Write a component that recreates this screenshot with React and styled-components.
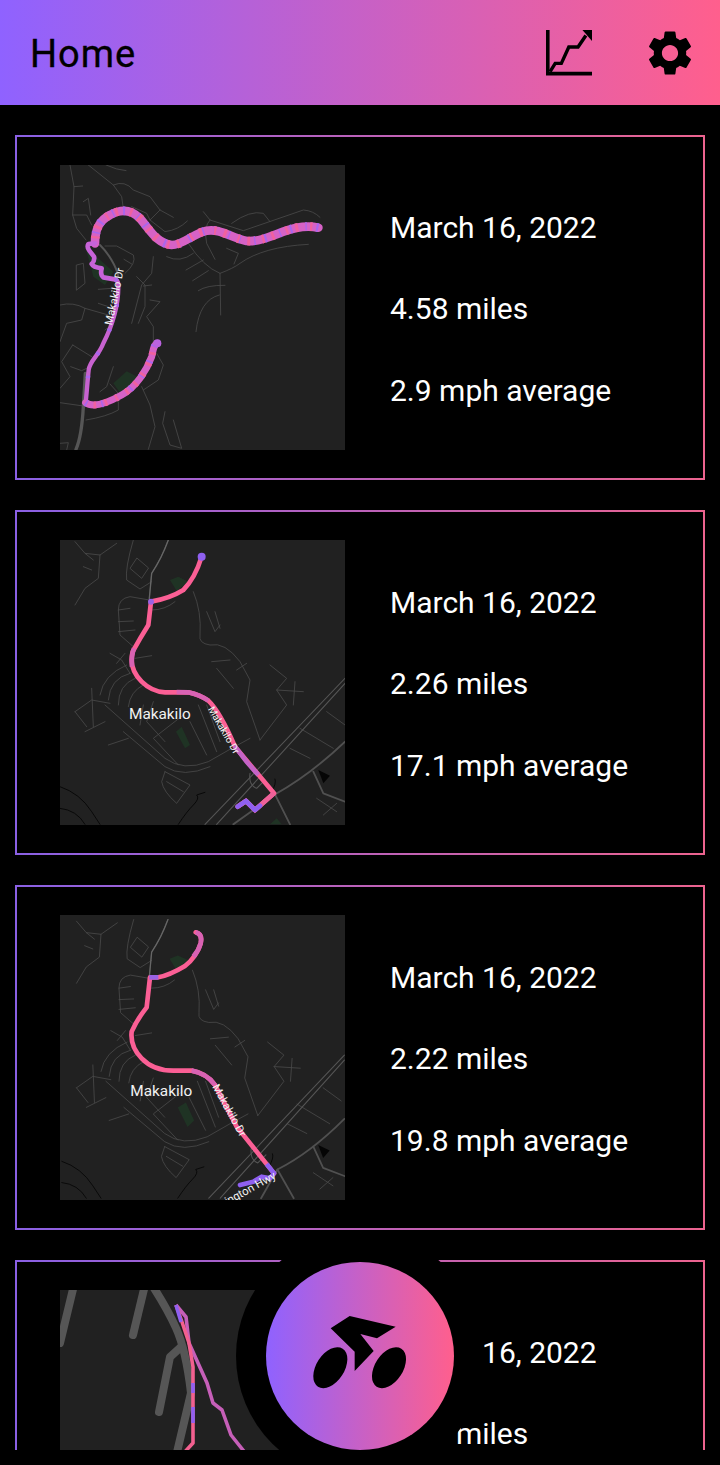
import React from 'react'
import styled, { createGlobalStyle } from 'styled-components'
import { MdSettings } from 'react-icons/md'

const brand = 'linear-gradient(90deg, #8f62ff 0%, #ff5f8d 100%)'

const GlobalStyle = createGlobalStyle`
  html, body {
    margin: 0;
    background: #000;
  }
  body {
    font-family: Roboto, "Noto Sans", sans-serif;
  }
`

const Screen = styled.div`
  position: relative;
  width: 720px;
  height: 1465px;
  overflow: hidden;
  background: #000;
`
const Header = styled.header`
  height: 105px;
  display: flex;
  align-items: center;
  justify-content: space-between;
  padding: 2px 23px 0 30px;
  box-sizing: border-box;
  background: ${brand};
`
const Title = styled.h1`
  margin: 0;
  font-size: 38px;
  line-height: 1;
  font-weight: 400;
  color: #000;
  letter-spacing: 1px;
  -webkit-text-stroke: 0.3px #000;
`
const HeaderActions = styled.div`
  display: flex;
  align-items: center;
  gap: 51px;
  margin-top: -2px;
  color: #000;
`
const ChartIcon = styled.svg`
  display: block;
  width: 46px;
  height: 46px;
`
const GearButton = styled.span`
  display: flex;
  width: 54px;
  height: 54px;
  align-items: center;
  justify-content: center;
  font-size: 54px;
`
const Feed = styled.main`
  height: 1345px;
  overflow: hidden;
  padding: 30px 15px 0;
  box-sizing: border-box;
  display: flex;
  flex-direction: column;
  gap: 30px;
`
const Card = styled.article`
  flex: none;
  height: 345px;
  box-sizing: border-box;
  display: flex;
  align-items: center;
  gap: 45px;
  padding: 0 0 0 43px;
  border: 2px solid;
  border-image: linear-gradient(90deg, #8a60e4, #ec638f) 1;
`
const MapFrame = styled.svg`
  flex: none;
  display: block;
  width: 285px;
  height: 285px;
  background: #212121;
`
const Stats = styled.div`
  display: flex;
  flex-direction: column;
  gap: 47px;
  margin-top: 4px;
`
const Stat = styled.div`
  font-size: 30px;
  line-height: 34.5px;
  color: #fff;
  white-space: nowrap;
`
const FabRing = styled.div`
  position: absolute;
  left: 236px;
  top: 1232px;
  width: 248px;
  height: 248px;
  border-radius: 50%;
  background: #000;
  display: flex;
  align-items: center;
  justify-content: center;
`
const Fab = styled.button`
  width: 188px;
  height: 188px;
  padding: 0;
  border: 0;
  border-radius: 50%;
  background: ${brand};
  display: flex;
  align-items: center;
  justify-content: center;
`
const BikeIcon = styled.svg`
  display: block;
  width: 94px;
  height: 75px;
  margin-bottom: 8px;
`

const Road = ({ d, w = 2.4, c = '#4b4b4b' }) => (
  <path d={d} fill="none" stroke={c} strokeWidth={w} strokeLinecap="round" strokeLinejoin="round" />
)

const Roads = ({ paths, w, c }) => paths.map((d, i) => <Road key={i} d={d} w={w} c={c} />)

// route drawn as a base colour with broken overlays, the map's speed colouring
const Route = ({ d, w, base, overlays = [] }) => (
  <g fill="none" strokeLinecap="round" strokeLinejoin="round" strokeWidth={w}>
    <path d={d} stroke={base} />
    {overlays.map((o, i) => (
      <path key={i} d={d} stroke={o.c} strokeDasharray={o.dash} strokeDashoffset={o.off || 0} strokeLinecap="butt" />
    ))}
  </g>
)

const MapLabel = ({ x, y, size = 46, rotate, children }) => (
  <text
    x={x}
    y={y}
    fill="#f2f2f2"
    fontFamily="Roboto, sans-serif"
    fontSize={size}
    transform={rotate ? `rotate(${rotate} ${x} ${y})` : undefined}
  >
    {children}
  </text>
)

const MapOne = () => (
  <MapFrame viewBox="30 15 855 855">
    <path d="M105 260 L190 335 L165 375 L130 350 L120 310 Z" fill="#1f3324" />
    <path d="M190 670 L230 634 L262 650 L268 672 L210 698 Z" fill="#1f3324" />
    <Roads
      paths={[
        'M60 15 L72 80 L68 165 L80 205 L108 240',
        'M115 15 L190 75 L215 110 L220 145',
        'M168 15 Q200 30 228 32',
        'M190 75 Q225 60 250 90 L300 110 L330 150 L370 172',
        'M68 165 L110 165 L125 195',
        'M72 80 L98 78',
        'M100 125 L115 115 L122 165',
        'M330 150 L300 180',
        'M245 140 L290 160 L300 180 L345 215 Q385 210 412 183',
        'M460 155 L480 180 L580 212 L760 150 Q790 152 810 172',
        'M545 190 Q600 150 640 160 L660 185',
        'M480 180 Q460 200 470 250 L495 298',
        'M415 250 Q460 320 510 340 Q550 325 570 310 Q640 260 775 253',
        'M350 290 Q390 310 430 280',
        'M408 330 L460 300',
        'M428 362 L475 332',
        'M530 265 L565 280 L552 312',
        'M445 392 Q470 375 525 376',
        'M510 340 L512 465',
        'M438 515 Q448 420 508 405',
        'M165 258 L200 258 L250 285 Q260 310 225 340',
        'M222 298 L245 312',
        'M310 290 L305 340 L275 375 L245 490',
        'M260 350 L285 375 L285 440 L265 490',
        'M305 375 L280 378 M300 420 L330 425 L290 470 L310 500 L310 550',
        'M30 435 Q70 425 105 445 L175 465',
        'M105 445 L95 480 L50 490 L30 545',
        'M145 430 L175 440 M165 510 L185 495 M145 388 L185 385',
        'M80 315 L100 310 L105 370 L80 390 Z',
        'M68 555 L35 605 L60 650 L30 685',
        'M68 555 L125 590 M62 620 L95 632 L110 625',
        'M30 728 L100 738 M108 780 Q170 770 205 750 L205 725',
        'M275 680 L300 735 L315 800 L295 868',
        'M345 755 L338 790 L360 855 L395 865 L370 780',
        'M30 850 L55 848 L50 870',
        'M190 620 L170 680 L150 695 M180 672 L205 700',
        'M320 580 L340 615 L325 660 L280 690'
      ]}
    />
    <Road d="M106 640 L100 740 Q95 830 78 868" w={10} c="#565656" />
    <Road d="M150 255 C175 280 200 320 205 350" w={6} c="#565656" />
    <Route
      d="M805 203 C770 195 740 200 700 215 C650 235 620 245 590 243 C540 232 510 205 470 212 C430 220 400 255 365 255 C320 250 300 210 270 175 C245 150 215 145 180 165 C150 180 135 205 135 250"
      w={26}
      base="#d662c6"
      overlays={[
        { c: '#a966ee', dash: '6 29 4 41' },
        { c: '#f0619f', dash: '9 23 7 36', off: 14 }
      ]}
    />
    <Route
      d="M135 250 L115 252 Q110 262 118 272 L132 290 Q135 302 125 312 Q130 322 155 325 Q150 345 160 352 L195 358"
      w={14}
      base="#c763d8"
    />
    <Route
      d="M195 358 C205 362 205 370 205 380 C205 440 190 490 160 550 C145 590 120 600 116 630 C112 670 110 700 107 728"
      w={13}
      base="#c762cf"
      overlays={[{ c: '#a966ee', dash: '8 70' }]}
    />
    <Route
      d="M107 728 C130 745 170 730 215 705 C260 680 290 630 305 590 C310 570 310 555 322 550"
      w={21}
      base="#d662c6"
      overlays={[
        { c: '#a966ee', dash: '5 44' },
        { c: '#f0619f', dash: '8 27', off: 10 }
      ]}
    />
    <circle cx="322" cy="550" r="12" fill="#bb63e0" />
    <MapLabel x={186} y={497} size={33} rotate={-78}>Makakilo Dr</MapLabel>
  </MapFrame>
)

const makakiloStreets = [
  'M355 15 Q335 70 305 115 L298 190',
  'M75 20 L105 55 L150 60 L200 25 M105 55 L130 75 M100 95 L125 105 M150 60 L145 130 L105 160 L75 210',
  'M250 15 Q225 100 230 135 L270 162 L305 140',
  'M260 70 L240 100 L275 130 L295 100 Z',
  'M298 195 L240 185 Q205 190 205 225 L210 300 L250 335',
  'M205 225 L240 220 M205 260 L250 258 M205 290 L255 285',
  'M305 225 Q345 225 375 200',
  'M430 170 Q455 230 450 300 Q445 325 480 330 Q525 320 570 380 L600 435 L590 500 L630 615',
  'M470 230 L495 290 L510 270 M495 230 L510 280',
  'M485 380 L540 375 M500 400 L550 460 M560 405 L590 385',
  'M660 390 L710 430 L680 465 L710 510 L630 615 M680 465 L760 470 M735 440 L730 510',
  'M255 370 L305 362 M180 355 L215 375 L240 415 M200 385 L225 355',
  'M150 480 Q160 420 230 390 M175 495 Q180 430 240 415 M205 510 Q205 450 255 430 M235 515 Q240 470 280 450',
  'M75 530 L125 495 L180 505 M75 530 L110 575 M125 460 L130 575',
  'M105 590 L165 560 M175 630 L235 610',
  'M165 510 L345 670 Q400 710 475 680 L545 640 L600 610',
  'M220 590 L345 695 Q400 730 480 695',
  'M280 510 L270 570 M310 500 L290 560 L345 620 M400 540 L310 610 L385 690',
  'M420 560 L470 660 M445 510 L500 650 M470 510 L510 620',
  'M345 710 L335 740 Q340 770 380 805 L420 750 L345 710 M350 740 L400 770',
  'M720 640 L780 670 M750 580 L850 640 M830 530 L885 570',
  'M800 790 L860 830 M820 840 L860 805'
]
const coastLines = [
  'M30 755 Q90 775 125 830 L150 868',
  'M30 820 Q80 825 105 868',
  'M385 868 Q410 830 430 810 Q450 790 440 780 L465 772',
  'M665 770 Q680 745 675 732'
]

const MapTwo = () => (
  <MapFrame viewBox="30 15 855 855">
    <path d="M360 135 L385 125 L415 140 L380 168 Z M378 590 L395 575 L420 630 L405 640 Z M660 868 L680 850 L695 868 Z" fill="#1f3324" />
    <Roads paths={makakiloStreets} />
    <Roads paths={coastLines} c="#050505" w={2.6} />
    <Roads w={3.2} c="#555" paths={['M465 868 L885 430', 'M500 868 L885 445', 'M600 715 Q595 750 620 760 L645 735']} />
    <Roads
      w={5.5}
      c="#505050"
      paths={['M550 868 L675 778 Q780 720 885 620', 'M675 778 L720 868', 'M790 710 L820 775 L885 800']}
    />
    <Road d="M355 15 Q335 70 305 115 L298 190" w={4} c="#666" />
    <path d="M805 705 L840 722 L820 745 Z" fill="#050505" />
    <Route
      d="M455 65 Q435 130 400 165 Q360 190 303 200 L295 270 Q270 310 248 350 Q235 400 275 440 Q305 470 345 472 L415 472 Q450 480 475 497 Q510 530 555 635 L672 775 L615 825 L588 798 L563 815"
      w={14}
      base="#fb5f95"
    />
    <g fill="none" strokeWidth="14" strokeLinecap="butt">
      <path d="M252 340 Q243 365 246 395" stroke="#d862b3" />
      <path d="M380 471 L415 472 Q450 480 475 497" stroke="#d862b3" />
      <path d="M553 632 L590 680 L625 720" stroke="#c563c6" />
    </g>
    <path d="M672 775 L615 825 L588 798 L563 815" fill="none" stroke="#ee6199" strokeWidth="14" />
    <path d="M630 812 L615 825 L588 798 L563 815" fill="none" stroke="#8f60f0" strokeWidth="14" strokeLinecap="round" strokeLinejoin="round" />
    <circle cx="303" cy="200" r="9" fill="#9a62e4" />
    <circle cx="455" cy="65" r="12" fill="#8f60f0" />
    <MapLabel x={237} y={551}>Makakilo</MapLabel>
    <MapLabel x={473} y={522} size={30} rotate={60}>Makakilo Dr</MapLabel>
  </MapFrame>
)

const shift = 'translate(6 14) scale(0.98)'

const MapThree = () => (
  <MapFrame viewBox="30 15 855 855">
    <g transform={shift}>
      <path d="M360 135 L385 125 L420 140 L380 168 Z M385 590 L410 575 L435 630 L415 650 Z" fill="#1f3324" />
      <Roads paths={makakiloStreets} />
      <Roads paths={coastLines} c="#050505" w={2.6} />
      <Roads w={3.2} c="#555" paths={['M480 868 L895 430', 'M515 868 L895 445', 'M610 715 Q605 750 630 760 L655 735']} />
      <Roads
        w={5.5}
        c="#505050"
        paths={['M640 868 L690 780 Q790 730 895 625', 'M690 780 L740 868', 'M800 710 L830 775 L895 800']}
      />
      <Road d="M355 15 Q335 70 305 115 L298 190" w={4} c="#666" />
      <path d="M815 705 L850 722 L830 745 Z" fill="#050505" />
    </g>
    <Route
      d="M437 67 Q458 72 452 100 Q440 140 405 168 Q360 195 325 202 L300 202 L290 292 Q260 330 245 365 Q240 410 275 445 Q310 482 370 482 L425 482 Q470 490 495 525 L560 650 L672 790"
      w={14}
      base="#fb5f95"
    />
    <g fill="none" strokeWidth="14">
      <path d="M437 67 Q458 72 452 100 Q446 122 430 140" stroke="#d862b3" />
      <path d="M425 482 Q470 490 495 525" stroke="#d862b3" />
      <path d="M298 202 L325 202" stroke="#9a62e4" />
      <path d="M650 762 L672 790" stroke="#8f60f0" />
    </g>
    <path d="M672 790 L660 805 L635 800 L610 815 L570 825" fill="none" stroke="#8f60f0" strokeWidth="14" strokeLinecap="round" strokeLinejoin="round" />
    <MapLabel x={241} y={557}>Makakilo</MapLabel>
    <MapLabel x={486} y={530} size={33} rotate={61}>Makakilo Dr</MapLabel>
    <MapLabel x={480} y={915} size={34} rotate={-29}>Farrington Hwy</MapLabel>
  </MapFrame>
)

const MapFour = () => (
  <MapFrame viewBox="0 0 285 285">
    <Roads
      w={8}
      c="#565656"
      paths={[
        'M14 -5 L0 53',
        'M85 -5 L73 45',
        'M92 -5 Q108 20 116 38 Q126 60 131 103 L114 175',
        'M121 57 L110 67 L99 122'
      ]}
    />
    <path d="M116 15 L126 27 L129 53 L147 93 L153 113 L162 120 L171 145 L183 160 L195 175" fill="none" stroke="#c65fb8" strokeWidth="3.6" strokeLinejoin="round" />
    <path d="M116 15 L122 32 L129 53 L133 77 L133 153 L122 165" fill="none" stroke="#f2608f" strokeWidth="3.6" strokeLinejoin="round" />
    <g fill="none" stroke="#8f60f0" strokeWidth="3.6">
      <path d="M116 15 L121 32" />
      <path d="M133 93 L133 103" />
      <path d="M133 117 L133 133" />
    </g>
  </MapFrame>
)

const rides = [
  { map: <MapOne />, date: 'March 16, 2022', miles: '4.58 miles', speed: '2.9 mph average' },
  { map: <MapTwo />, date: 'March 16, 2022', miles: '2.26 miles', speed: '17.1 mph average' },
  { map: <MapThree />, date: 'March 16, 2022', miles: '2.22 miles', speed: '19.8 mph average' },
  { map: <MapFour />, date: 'March 16, 2022', miles: '5.61 miles', speed: '14.2 mph average' }
]

const App = () => {
  return (
    <Screen>
      <GlobalStyle />
      <Header>
        <Title>Home</Title>
        <HeaderActions>
          <ChartIcon viewBox="33 30 135 135">
            <path d="M38 30 V158 H168" fill="none" stroke="#000" strokeWidth="11" />
            <path d="M45 152 L60 128 H78 L100 80 H127 L150 46" fill="none" stroke="#000" strokeWidth="10" />
            <path d="M140 30 H168 V62 Z" fill="#000" />
          </ChartIcon>
          <GearButton>
            <MdSettings />
          </GearButton>
        </HeaderActions>
      </Header>
      <Feed>
        {rides.map((ride, i) => (
          <Card key={i}>
            {ride.map}
            <Stats>
              <Stat>{ride.date}</Stat>
              <Stat>{ride.miles}</Stat>
              <Stat>{ride.speed}</Stat>
            </Stats>
          </Card>
        ))}
      </Feed>
      <FabRing>
        <Fab aria-label="Start ride">
          <BikeIcon viewBox="70 75 282 225">
            <path d="M180 78 L318 110 L262 145 L212 132 L252 183 L195 243 V185 L123 115 Z" fill="#000" />
            <ellipse cx="122" cy="233" rx="42" ry="68" transform="rotate(33 122 233)" fill="#000" />
            <ellipse cx="298" cy="233" rx="42" ry="68" transform="rotate(33 298 233)" fill="#000" />
          </BikeIcon>
        </Fab>
      </FabRing>
    </Screen>
  )
}

export default App
